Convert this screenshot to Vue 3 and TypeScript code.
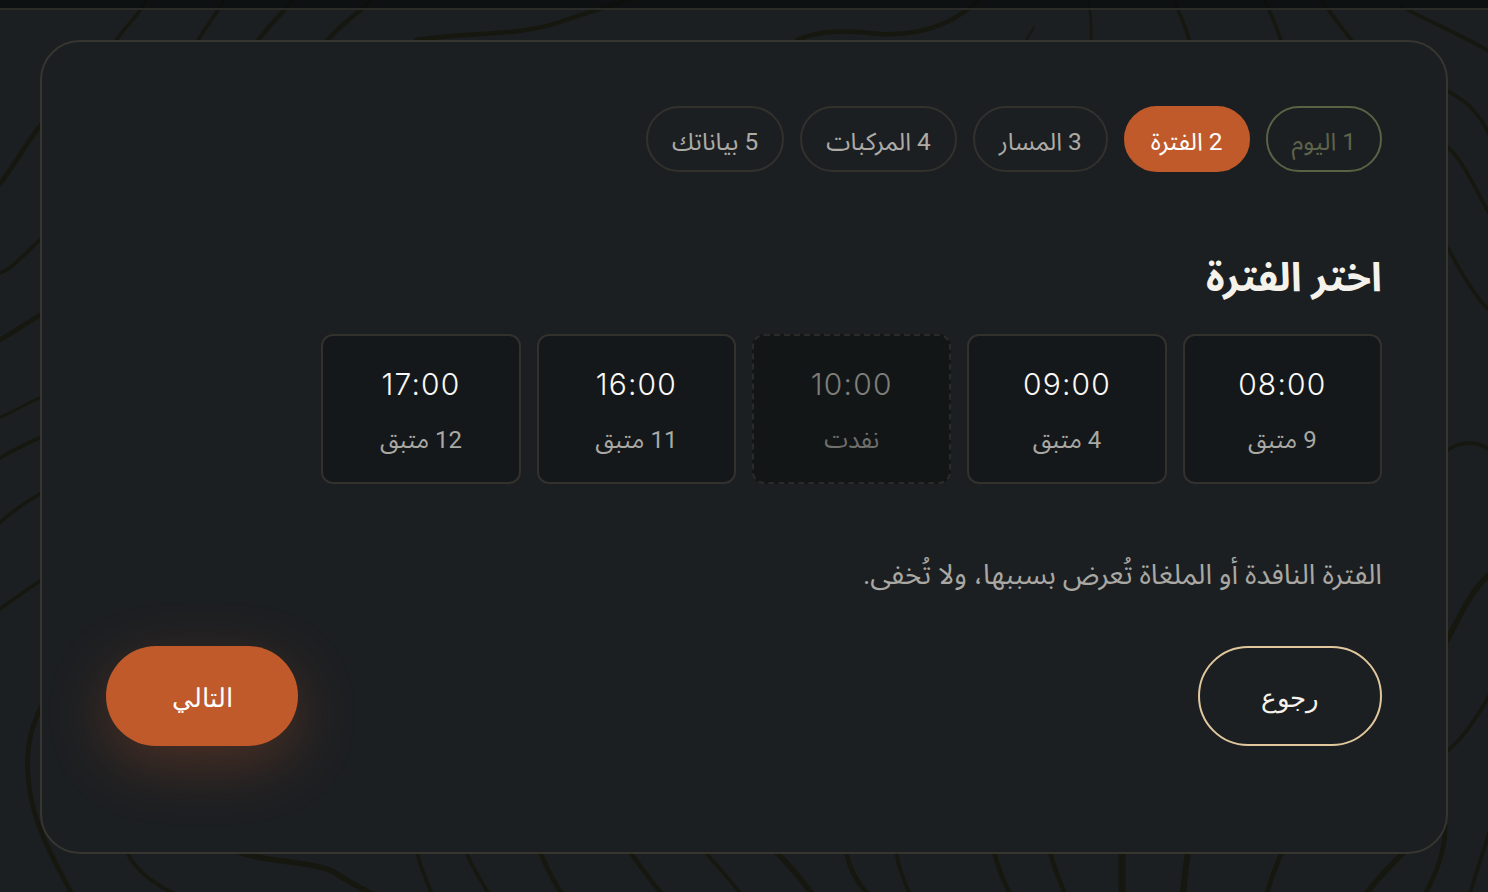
<script setup lang="ts">
interface Step { label: string; state: 'done' | 'active' | 'idle' }
interface Slot { time: string; sub: string; out?: boolean }

const steps: Step[] = [
  { label: '1 اليوم', state: 'done' },
  { label: '2 الفترة', state: 'active' },
  { label: '3 المسار', state: 'idle' },
  { label: '4 المركبات', state: 'idle' },
  { label: '5 بياناتك', state: 'idle' },
]

const slots: Slot[] = [
  { time: '08:00', sub: '9 متبق' },
  { time: '09:00', sub: '4 متبق' },
  { time: '10:00', sub: 'نفدت', out: true },
  { time: '16:00', sub: '11 متبق' },
  { time: '17:00', sub: '12 متبق' },
]

const lines: [string, number][] = [
  ['M146 0 C140 15 128 22 115 42', 3.5],
  ['M224 0 C218 12 206 26 197 42', 3.5],
  ['M292 0 C284 12 268 26 257 42', 4.5],
  ['M372 0 C360 12 340 24 326 42', 4.5],
  ['M416 40 C470 32 520 36 560 22 C600 8 630 0 660 -10', 4.5],
  ['M797 40 C820 30 845 30 880 34 C930 36 960 20 990 -10', 4.5],
  ['M1034 27 L1025 42', 2],
  ['M1088 0 C1091 14 1092 28 1091 42', 2.5],
  ['M1174 0 C1180 14 1186 28 1190 42', 3.5],
  ['M1264 0 C1272 14 1276 28 1282 42', 3.5],
  ['M1322 0 C1332 16 1342 28 1353 42', 3.5],
  ['M1400 6 C1430 22 1460 34 1490 52', 3.5],
  ['M1446 90 C1460 98 1476 106 1490 136', 3.5],
  ['M1446 146 C1462 158 1476 190 1490 215', 3.5],
  ['M1446 245 C1460 270 1474 296 1490 311', 3.5],
  ['M1446 451 C1460 441 1476 440 1490 450', 3.5],
  ['M1446 642 C1456 625 1470 590 1490 574', 5.5],
  ['M1446 752 C1464 738 1478 716 1490 694', 3.5],
  ['M-2 186 C12 170 26 142 42 124', 4.5],
  ['M-2 274 C14 268 28 250 42 238', 3.5],
  ['M-2 341 C14 332 28 322 42 314', 4.5],
  ['M-2 418 C14 412 28 402 42 397', 2.5],
  ['M-2 459 C14 450 28 442 42 437', 3.5],
  ['M-2 524 C14 510 28 500 42 493', 3.5],
  ['M-2 610 C14 600 28 588 42 580', 3.5],
  ['M42 705 C30 728 26 752 28 775 C30 810 42 840 72 894', 4.5],
  ['M127 852 C134 868 150 882 175 894', 3.5],
  ['M238 852 C270 864 320 860 340 876 C352 884 362 888 372 894', 5.5],
  ['M417 852 C420 866 426 880 432 894', 3.5],
  ['M466 852 C472 866 480 880 489 894', 3.5],
  ['M540 852 C546 866 552 880 562 894', 4.5],
  ['M630 852 C640 866 650 880 662 894', 4.5],
  ['M705 852 C718 866 730 880 741 894', 3.5],
  ['M776 852 C790 866 802 880 812 894', 5.5],
  ['M846 852 C850 870 858 884 868 894', 4.5],
  ['M896 852 C899 868 904 882 910 894', 3.5],
  ['M994 852 C998 868 1004 882 1010 894', 4.5],
  ['M1050 852 C1054 868 1060 882 1065 894', 4.5],
  ['M1122 852 L1122 894', 7],
  ['M1188 852 C1186 866 1184 880 1183 894', 6],
  ['M1282 852 C1276 866 1270 880 1267 894', 4.5],
  ['M1404 852 C1390 866 1376 880 1366 894', 5.5],
  ['M1445 825 C1446 846 1438 870 1425 894', 4.5],
  ['M1490 830 C1484 850 1476 872 1470 894', 3.5],
]
</script>

<template>
  <div class="page" dir="rtl">
    <svg class="topo" viewBox="0 0 1488 892" aria-hidden="true">
      <path v-for="(l, i) in lines" :key="i" :d="l[0]" :stroke-width="l[1]" />
    </svg>
    <div class="topbar"></div>
    <main class="wrap">
      <section class="card">
        <nav class="steps">
          <span v-for="s in steps" :key="s.label" class="step" :class="s.state">{{ s.label }}</span>
        </nav>
        <h2 class="title">اختر الفترة</h2>
        <div class="slots">
          <button v-for="s in slots" :key="s.time" type="button" class="slot" :class="{ out: s.out }">
            <span class="time">{{ s.time }}</span>
            <span class="sub">{{ s.sub }}</span>
          </button>
        </div>
        <p class="note">الفترة النافدة أو الملغاة تُعرض بسببها، ولا تُخفى.</p>
        <div class="actions">
          <button type="button" class="btn back">رجوع</button>
          <button type="button" class="btn next">التالي</button>
        </div>
      </section>
    </main>
  </div>
</template>

<style scoped>
.page {
  position: relative;
  height: 892px;
  overflow: hidden;
  background: #1b1f22;
  font-family: Roboto, "Noto Sans Arabic", "Noto Sans", sans-serif;
}
.topo {
  position: absolute;
  inset: 0;
  width: 1488px;
  height: 892px;
}
.topo path {
  fill: none;
  stroke: #16170e;
  stroke-linecap: round;
}
.topbar {
  position: relative;
  height: 8px;
  background: rgba(8, 12, 13, 0.72);
  border-bottom: 2px solid #2b2b27;
}
.wrap {
  position: relative;
  padding: 30px 40px 0;
}
.card {
  box-sizing: border-box;
  height: 814px;
  padding: 64px;
  background: #1c1f22;
  border: 2px solid #363530;
  border-radius: 40px;
}
.steps {
  display: flex;
  gap: 16px;
}
.step {
  box-sizing: border-box;
  height: 66px;
  padding: 5px 24px 0;
  display: flex;
  align-items: center;
  border: 2px solid #32312d;
  border-radius: 33px;
  font-size: 24.45px;
  font-weight: 400;
  color: #adaba6;
}
.step.done {
  border-color: #5a6244;
  color: #5e6449;
}
.step.active {
  padding: 5px 25px 0;
  background: #c05a2b;
  border-color: #c05a2b;
  color: #fff;
}
.title {
  margin: 74px 0 24px;
  height: 64px;
  line-height: 64px;
  font-size: 40px;
  font-weight: 700;
  color: #f5f2ec;
}
.slots {
  display: grid;
  grid-template-columns: repeat(6, 1fr);
  gap: 16px;
}
.slot {
  box-sizing: border-box;
  height: 150px;
  padding: 0;
  display: flex;
  flex-direction: column;
  align-items: center;
  background: #15181a;
  border: 2px solid #32312d;
  border-radius: 12px;
  font-family: inherit;
}
.time {
  margin-top: 29px;
  height: 38px;
  line-height: 38px;
  font-family: Inter, sans-serif;
  font-size: 30px;
  font-weight: 300;
  letter-spacing: 1.2px;
  color: #fbf9f5;
}
.sub {
  margin-top: 21px;
  height: 32px;
  line-height: 32px;
  font-size: 24px;
  font-weight: 400;
  color: #a9a8a3;
}
.slot.out {
  background: #131617;
  border: 2px dashed #2a2b28;
}
.slot.out .time { color: #7e7e7b; }
.slot.out .sub { color: #6f6f6c; }
.note {
  margin: 71px 0 51px;
  height: 40px;
  line-height: 40px;
  font-size: 28px;
  font-weight: 400;
  color: #a9a8a3;
}
.actions {
  display: flex;
  justify-content: space-between;
}
.btn {
  box-sizing: border-box;
  height: 100px;
  border-radius: 50px;
  font-family: "Noto Sans", sans-serif;
  font-size: 26px;
  padding: 2px 0 0;
}
.back {
  width: 184px;
  background: transparent;
  border: 2px solid #e0c79d;
  color: #f5f2ec;
}
.next {
  width: 192px;
  background: #c05a2b;
  border: 0;
  color: #fff;
  box-shadow: 0 18px 60px rgba(192, 90, 43, 0.3);
}
</style>
